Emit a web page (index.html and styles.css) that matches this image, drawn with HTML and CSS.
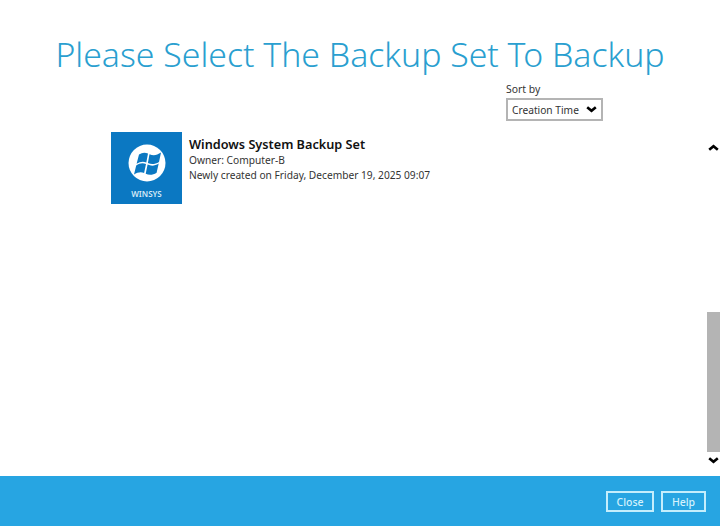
FILE: index.html
```html
<!DOCTYPE html>
<html lang="en">
<head>
<meta charset="utf-8">
<title>Backup</title>
<link rel="stylesheet" href="styles.css">
</head>
<body>
<div class="app">
  <main class="content">
    <div class="panel">
      <h1 class="title">Please Select The Backup Set To Backup</h1>
      <div class="sort">
        <div class="sort-label">Sort by</div>
        <div class="select">
          <span>Creation Time</span>
          <svg class="chev" width="11" height="7" viewBox="0 0 11 7"><path d="M1.2 1.2 5.5 4.8 9.8 1.2" fill="none" stroke="#000" stroke-width="2.6"/></svg>
        </div>
      </div>
      <div class="item">
        <div class="tile">
          <svg class="logo" width="38" height="38" viewBox="0 0 38 38">
            <circle cx="19" cy="19" r="18.5" fill="#fff"/>
            <path d="M11 10.4C14 8.6 17 8.4 20 9.6L18.3 18.4C15.1 17.2 11.9 17.6 8.6 19.8Z M21.5 10.2C25.2 11.8 28.9 11.4 33 8.6L31 18C27 20.4 23.4 20.6 19.9 19Z M8.2 21.4C11.6 19.2 14.8 18.8 18 20L16.1 29C13 27.8 9.6 28.2 6 30.6Z M19.6 20.6C23.2 22.2 26.9 22 30.7 19.6L28.6 28.8C24.8 31.2 21 31.4 17.7 29.8Z" fill="#0b78c2"/>
          </svg>
          <div class="tile-label">WINSYS</div>
        </div>
        <div class="info">
          <div class="name">Windows System Backup Set</div>
          <div class="meta">Owner: Computer-B</div>
          <div class="meta">Newly created on Friday, December 19, 2025 09:07</div>
        </div>
      </div>
    </div>
    <div class="scrollbar">
      <svg class="arrow-up" width="11" height="7" viewBox="0 0 11 7"><path d="M1.2 5.8 5.5 2.2 9.8 5.8" fill="none" stroke="#000" stroke-width="2.6"/></svg>
      <div class="track"><div class="thumb"></div></div>
      <svg class="arrow-down" width="11" height="7" viewBox="0 0 11 7"><path d="M1.2 1.2 5.5 4.8 9.8 1.2" fill="none" stroke="#000" stroke-width="2.6"/></svg>
    </div>
  </main>
  <footer class="footer">
    <button class="btn btn-close">Close</button>
    <button class="btn btn-help">Help</button>
  </footer>
</div>
</body>
</html>
```
FILE: styles.css
```css
* { box-sizing: border-box; }
html, body { margin: 0; padding: 0; height: 526px; overflow: hidden; background: #fff; }
body { font-family: "Noto Sans", "Open Sans", sans-serif; color: #222; }
.app { display: flex; flex-direction: column; height: 526px; }
.content { flex: 1; display: flex; min-height: 0; }
.panel { flex: 1; min-width: 0; display: flex; flex-direction: column; }
.title {
  margin: 32px -13px 0 0;
  font-size: 33.8px;
  line-height: 44px;
  font-weight: 300;
  color: #2a9fd0;
  text-align: center;
  white-space: nowrap;
}
.sort { margin: 6px 0 0 506px; width: 97px; }
.sort-label { font-size: 10.4px; line-height: 15px; color: #333; }
.select {
  margin-top: 1px;
  height: 23px;
  border: 2px solid #b4b4b4;
  padding: 0 4px 0 4px;
  display: flex;
  align-items: center;
  justify-content: space-between;
  font-size: 10.2px;
  color: #333;
}
.item { display: flex; margin: 11px 0 0 111px; gap: 7px; }
.tile {
  width: 71px;
  height: 72px;
  background: #0b78c2;
  display: flex;
  flex-direction: column;
  align-items: center;
  padding-top: 12px;
}
.logo { display: block; }
.tile-label { margin-top: 6px; font-size: 8px; line-height: 11px; font-weight: 600; color: #d5e9f6; }
.info { padding-top: 3px; }
.name { font-size: 12.7px; line-height: 18px; font-weight: 600; color: #111; }
.meta { font-size: 10.2px; line-height: 15px; color: #333; }
.scrollbar { width: 13px; display: flex; flex-direction: column; align-items: center; padding-top: 144px; }
.arrow-up { display: block; flex: none; }
.track { flex: 1; width: 13px; display: flex; flex-direction: column; justify-content: flex-end; }
.thumb { height: 140px; background: #b4b4b4; }
.arrow-down { display: block; flex: none; margin: 5px 0 12px; }
.footer {
  height: 50px;
  flex: none;
  background: #27a5e2;
  display: flex;
  justify-content: flex-end;
  align-items: flex-start;
  gap: 7px;
  padding: 15px 14px 0 0;
}
.btn {
  height: 21px;
  border: 2px solid #c4eefc;
  background: transparent;
  color: #d4f2fc;
  font-family: inherit;
  font-size: 10.5px;
  font-weight: 500;
  padding: 0;
}
.btn-close { width: 48px; }
.btn-help { width: 45px; }
```
